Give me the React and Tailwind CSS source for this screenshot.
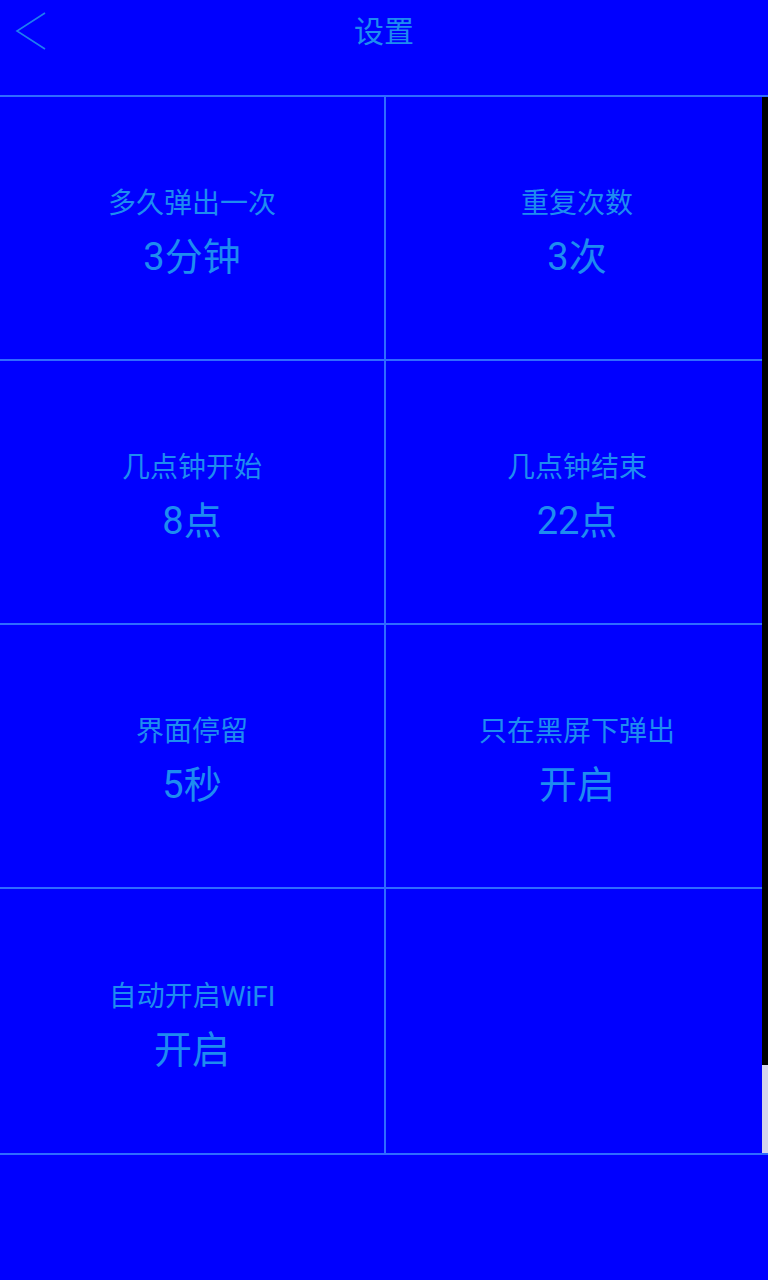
import React from 'react';

const items = [
  { label: '多久弹出一次', value: '3分钟' },
  { label: '重复次数', value: '3次' },
  { label: '几点钟开始', value: '8点' },
  { label: '几点钟结束', value: '22点' },
  { label: '界面停留', value: '5秒' },
  { label: '只在黑屏下弹出', value: '开启' },
  { label: '自动开启WiFI', value: '开启' },
  null,
];

const BackIcon = () => (
  <svg width="60" height="64" viewBox="0 0 60 64" fill="none">
    <path d="M45 13 L17 31 L45 49" stroke="#1e7ef0" strokeWidth="1.6" />
  </svg>
);

const Cell = ({ item, index }) => {
  const left = index % 2 === 0;
  const last = index >= items.length - 2;
  return (
    <div
      className={`h-[264px] pt-[10px] flex flex-col items-center justify-center gap-[10px] border-[#2f6cff] ${left ? 'border-r-2' : ''} ${last ? '' : 'border-b-2'}`}
    >
      {item && (
        <>
          <div className="text-[28px] leading-[34px] pb-[3px]">{item.label}</div>
          <div className="text-[38px] leading-[46px]">{item.value}</div>
        </>
      )}
    </div>
  );
};

export default function App() {
  return (
    <div
      className="w-[768px] h-[1280px] bg-[#0000ff] text-[#1e8cf0] overflow-hidden"
      style={{ fontFamily: 'Roboto, "Noto Sans CJK SC", sans-serif' }}
    >
      <header className="h-[97px] border-b-2 border-[#2f6cff]">
        <div className="h-[64px] grid grid-cols-[60px_1fr_60px] items-center">
          <BackIcon />
          <h1 className="text-center text-[30px] leading-[40px]">设置</h1>
          <div />
        </div>
      </header>

      <div className="relative border-b-2 border-[#2f6cff]">
        <div className="grid grid-cols-[386px_1fr]">
          {items.map((item, i) => (
            <Cell key={i} item={item} index={i} />
          ))}
        </div>
        {/* scrollbar overlay */}
        <div className="absolute top-0 right-0 bottom-0 w-[6px] flex flex-col">
          <div className="flex-1 bg-black" />
          <div className="h-[88px] bg-[#d4d4ec]" />
        </div>
      </div>
    </div>
  );
}
